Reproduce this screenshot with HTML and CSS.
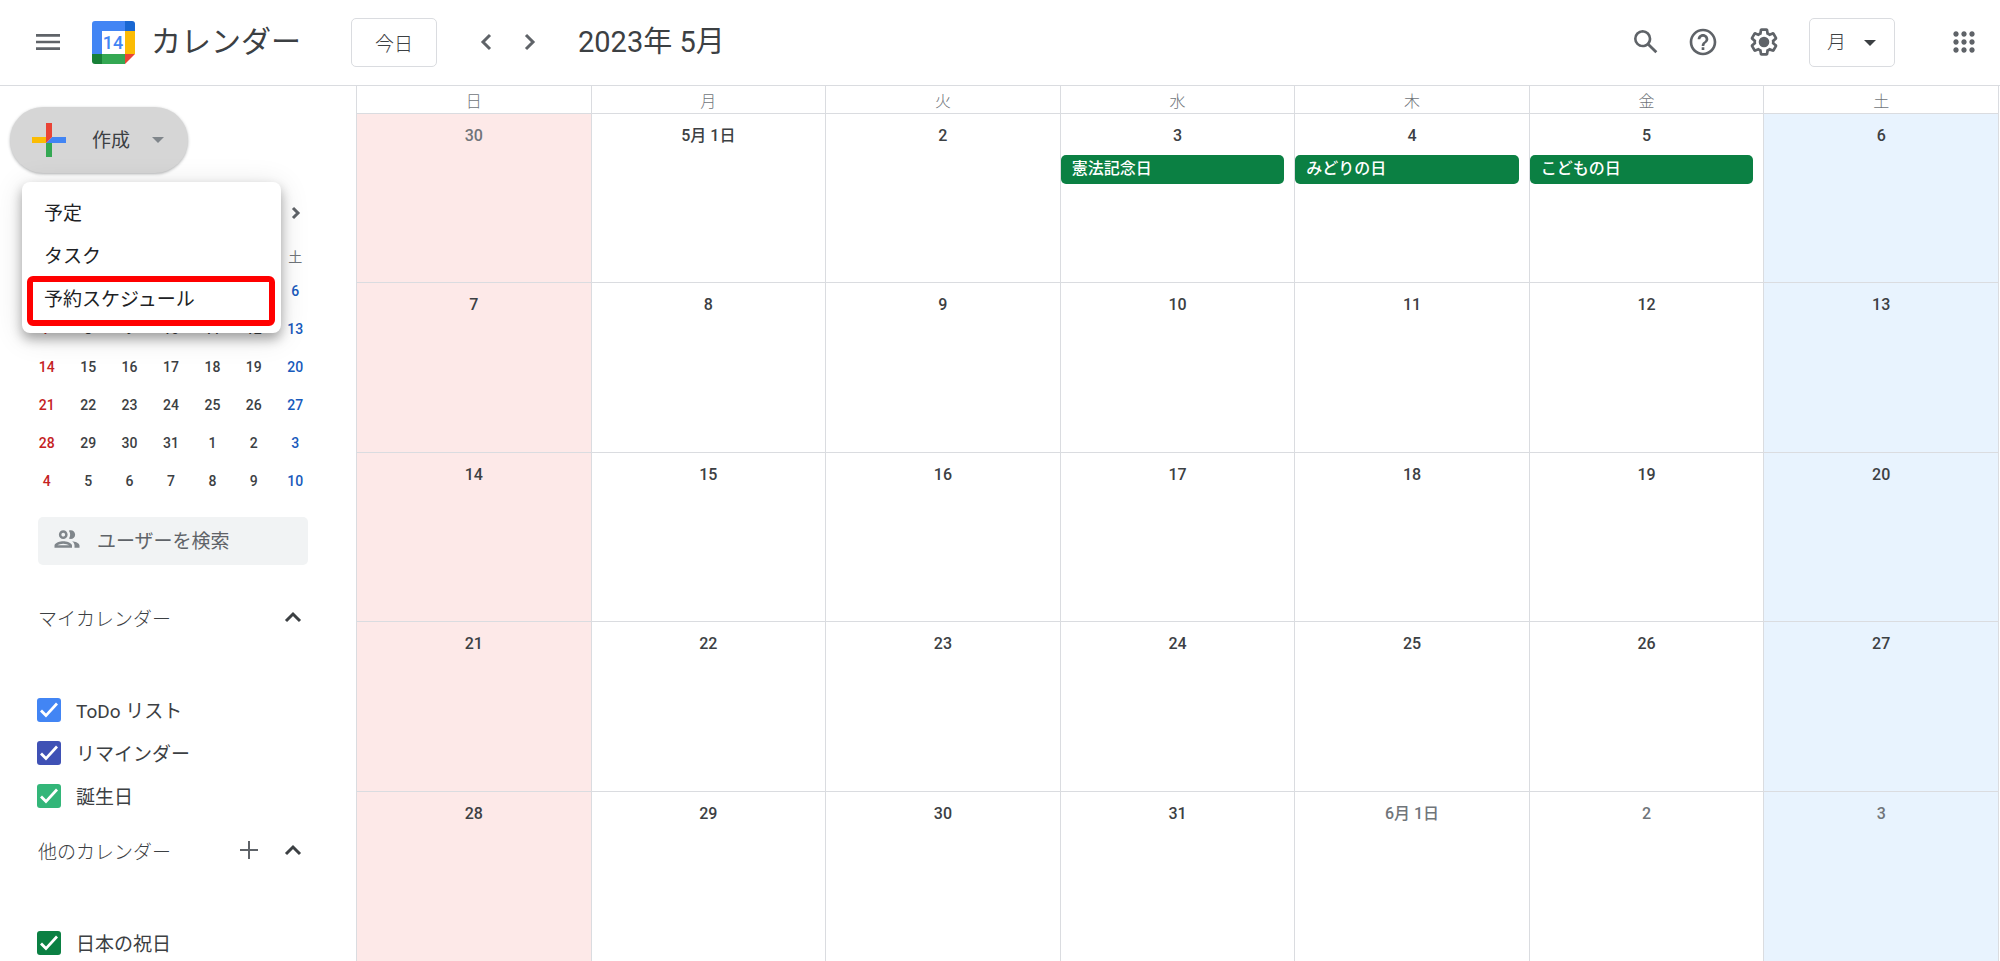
FILE: index.html
```html
<!DOCTYPE html>
<html lang="ja">
<head>
<meta charset="utf-8">
<meta name="viewport" content="width=device-width, initial-scale=1">
<title>カレンダー</title>
<link rel="stylesheet" href="styles.css">
</head>
<body>
<header class="topbar">
  <button class="icon-btn" type="button" aria-label="メニュー">
    <svg class="icon" viewBox="0 0 24 24"><path d="M3 18h18v-2H3v2zm0-5h18v-2H3v2zm0-7v2h18V6H3z"/></svg>
  </button>
  <a class="brand" href="#">
    <svg class="logo" viewBox="0 0 43 43" aria-hidden="true">
      <path fill="#4285f4" d="M3 0H33V10H10V33H0V3Q0 0 3 0Z"/>
      <path fill="#1967d2" d="M33 0H40Q43 0 43 3V10H33Z"/>
      <path fill="#fbbc04" d="M33 10H43V33H33Z"/>
      <path fill="#34a853" d="M10 33H33V43H10Z"/>
      <path fill="#188038" d="M0 33H10V43H3Q0 43 0 40Z"/>
      <path fill="#ea4335" d="M33 33H43L33 43Z"/>
      <path fill="#fff" d="M10 10H33V33H10Z"/>
      <text class="logo-day" x="21" y="28" text-anchor="middle">14</text>
    </svg>
    <span class="brand-name">カレンダー</span>
  </a>
  <button class="today" type="button">今日</button>
  <nav class="pager" aria-label="月の移動">
    <button class="icon-btn" type="button" aria-label="前の月"><svg class="icon" viewBox="0 0 32 32"><path class="chevron" d="M20 9l-7 7 7 7"/></svg></button>
    <button class="icon-btn" type="button" aria-label="次の月"><svg class="icon" viewBox="0 0 32 32"><path class="chevron" d="M12 9l7 7-7 7"/></svg></button>
  </nav>
  <h1 class="period">2023年 5月</h1>
  <div class="tools">
    <button class="icon-btn search" type="button" aria-label="検索">
      <svg class="icon" viewBox="0 0 24 24"><path d="M20.49 19l-5.73-5.73C15.53 12.2 16 10.91 16 9.5A6.5 6.5 0 1 0 9.5 16c1.41 0 2.7-.47 3.77-1.24L19 20.49 20.49 19zM5 9.5C5 7.01 7.01 5 9.5 5S14 7.01 14 9.5 11.99 14 9.5 14 5 11.99 5 9.5z"/></svg>
    </button>
    <button class="icon-btn" type="button" aria-label="サポート">
      <svg class="icon" viewBox="0 0 24 24"><path d="M11 18h2v-2h-2v2zm1-16C6.48 2 2 6.48 2 12s4.48 10 10 10 10-4.48 10-10S17.52 2 12 2zm0 18c-4.41 0-8-3.59-8-8s3.59-8 8-8 8 3.59 8 8-3.59 8-8 8zm0-14c-2.21 0-4 1.79-4 4h2c0-1.1.9-2 2-2s2 .9 2 2c0 2-3 1.75-3 5h2c0-2.25 3-2.5 3-5 0-2.21-1.79-4-4-4z"/></svg>
    </button>
    <button class="icon-btn" type="button" aria-label="設定">
      <svg class="icon" viewBox="0 0 24 24"><path d="M13.85 22.25h-3.7c-.74 0-1.36-.54-1.45-1.27l-.27-1.89c-.27-.14-.53-.29-.79-.46l-1.8.72c-.7.26-1.47-.03-1.81-.65L2.2 15.53c-.35-.66-.2-1.44.36-1.88l1.53-1.19c-.01-.15-.02-.3-.02-.46 0-.15.01-.31.02-.46l-1.52-1.19c-.59-.45-.74-1.26-.37-1.88l1.85-3.19c.34-.62 1.11-.9 1.79-.63l1.81.73c.26-.17.52-.32.78-.46l.27-1.91c.09-.7.71-1.25 1.44-1.25h3.7c.74 0 1.36.54 1.45 1.27l.27 1.89c.27.14.53.29.79.46l1.8-.72c.71-.26 1.48.03 1.82.65l1.84 3.18c.36.66.2 1.44-.36 1.88l-1.52 1.19c.01.15.02.3.02.46s-.01.31-.02.46l1.52 1.19c.56.45.72 1.23.37 1.86l-1.86 3.22c-.34.62-1.11.9-1.8.63l-1.8-.72c-.26.17-.52.32-.78.46l-.27 1.91c-.1.68-.72 1.22-1.46 1.22zm-3.23-2h2.76l.37-2.55.53-.22c.44-.18.88-.44 1.34-.78l.45-.34 2.38.96 1.38-2.4-2.03-1.58.07-.56c.03-.26.06-.51.06-.78s-.03-.53-.06-.78l-.07-.56 2.03-1.58-1.39-2.4-2.39.96-.45-.35c-.42-.32-.87-.58-1.33-.77l-.52-.22-.37-2.55h-2.76l-.37 2.55-.53.21c-.44.19-.88.44-1.34.79l-.45.33-2.38-.95-1.39 2.39 2.03 1.58-.07.56a7 7 0 0 0-.06.79c0 .26.02.53.06.78l.07.56-2.03 1.58 1.38 2.4 2.39-.96.45.35c.43.33.86.58 1.33.77l.53.22.38 2.55z"/><circle cx="12" cy="12" r="4"/></svg>
    </button>
    <label class="view">
      <select class="view-select" aria-label="表示"><option>月</option></select>
      <svg class="caret view-caret" viewBox="0 0 12 6"><path d="M0 0h12L6 6z"/></svg>
    </label>
    <button class="icon-btn apps" type="button" aria-label="アプリ">
      <svg class="icon" viewBox="0 0 24 24"><path d="M6 8c1.1 0 2-.9 2-2s-.9-2-2-2-2 .9-2 2 .9 2 2 2zm6 12c1.1 0 2-.9 2-2s-.9-2-2-2-2 .9-2 2 .9 2 2 2zm-6 0c1.1 0 2-.9 2-2s-.9-2-2-2-2 .9-2 2 .9 2 2 2zm0-6c1.1 0 2-.9 2-2s-.9-2-2-2-2 .9-2 2 .9 2 2 2zm6 0c1.1 0 2-.9 2-2s-.9-2-2-2-2 .9-2 2 .9 2 2 2zm4-8c0 1.1.9 2 2 2s2-.9 2-2-.9-2-2-2-2 .9-2 2zm-4 2c1.1 0 2-.9 2-2s-.9-2-2-2-2 .9-2 2 .9 2 2 2zm6 6c1.1 0 2-.9 2-2s-.9-2-2-2-2 .9-2 2 .9 2 2 2zm0 6c1.1 0 2-.9 2-2s-.9-2-2-2-2 .9-2 2 .9 2 2 2z"/></svg>
    </button>
  </div>
</header>

<div class="layout">
  <aside class="sidebar">
    <div class="create-wrap">
      <button class="create" type="button" aria-haspopup="menu" aria-expanded="true">
        <svg class="create-plus" viewBox="0 0 34 34" aria-hidden="true">
          <path fill="#fbbc04" d="M0 14h14v6H0z"/>
          <path fill="#34a853" d="M14 20h6v14h-6z"/>
          <path fill="#4285f4" d="M20 14h14v6H14z"/>
          <path fill="#ea4335" d="M14 0h6v14l-6 6z"/>
        </svg>
        <span class="create-label">作成</span>
        <svg class="caret create-caret" viewBox="0 0 12 6"><path d="M0 0h12L6 6z"/></svg>
      </button>
      <div class="menu" role="menu">
        <button class="menu-item" type="button" role="menuitem">予定</button>
        <button class="menu-item" type="button" role="menuitem">タスク</button>
        <button class="menu-item marked" type="button" role="menuitem">予約スケジュール</button>
      </div>
    </div>

    <div class="mini">
      <div class="mini-head">
        <button class="mini-next" type="button" aria-label="次の月"><svg class="mini-chevron" viewBox="0 0 24 24"><path class="chevron" d="M9 7l5 5-5 5"/></svg></button>
      </div>
      <table class="mini-table">
        <thead><tr><th></th><th></th><th></th><th></th><th></th><th></th><th>土</th></tr></thead>
        <tbody>
          <tr><td></td><td></td><td></td><td></td><td></td><td></td><td>6</td></tr>
          <tr><td>7</td><td>8</td><td>9</td><td>10</td><td>11</td><td>12</td><td>13</td></tr>
          <tr><td>14</td><td>15</td><td>16</td><td>17</td><td>18</td><td>19</td><td>20</td></tr>
          <tr><td>21</td><td>22</td><td>23</td><td>24</td><td>25</td><td>26</td><td>27</td></tr>
          <tr><td>28</td><td>29</td><td>30</td><td>31</td><td>1</td><td>2</td><td>3</td></tr>
          <tr><td>4</td><td>5</td><td>6</td><td>7</td><td>8</td><td>9</td><td>10</td></tr>
        </tbody>
      </table>
    </div>

    <label class="people">
      <svg class="people-icon" viewBox="0 0 24 24" aria-hidden="true"><path d="M9 13.75c-2.34 0-7 1.17-7 3.5V19h14v-1.75c0-2.33-4.66-3.5-7-3.5zM4.34 17c.84-.58 2.87-1.25 4.66-1.25s3.82.67 4.66 1.25H4.34zM9 12c1.93 0 3.5-1.57 3.5-3.5S10.93 5 9 5 5.5 6.57 5.5 8.5 7.07 12 9 12zm0-5c.83 0 1.5.67 1.5 1.5S9.83 10 9 10s-1.5-.67-1.5-1.5S8.17 7 9 7zm7.04 6.81c1.16.84 1.96 1.96 1.96 3.44V19h4v-1.75c0-2.02-3.5-3.17-5.96-3.44zM15 12c1.93 0 3.5-1.57 3.5-3.5S16.93 5 15 5c-.54 0-1.04.13-1.5.35.63.89 1 1.98 1 3.15s-.37 2.26-1 3.15c.46.22.96.35 1.5.35z"/></svg>
      <input class="people-input" type="text" placeholder="ユーザーを検索" aria-label="ユーザーを検索">
    </label>

    <section class="group">
      <div class="group-head">
        <h2 class="group-title">マイカレンダー</h2>
        <button class="group-btn" type="button" aria-label="マイカレンダーを折りたたむ"><svg class="group-icon" viewBox="0 0 24 24"><path class="chevron dark" d="M5 16l7-7 7 7"/></svg></button>
      </div>
      <div class="group-list">
        <label class="cal"><input class="check blue" type="checkbox" checked>ToDo リスト</label>
        <label class="cal"><input class="check indigo" type="checkbox" checked>リマインダー</label>
        <label class="cal"><input class="check mint" type="checkbox" checked>誕生日</label>
      </div>
    </section>
    <section class="group">
      <div class="group-head">
        <h2 class="group-title">他のカレンダー</h2>
        <button class="group-btn" type="button" aria-label="他のカレンダーを追加"><svg class="group-icon" viewBox="0 0 24 24"><path class="thin-plus" d="M12 3v18M3 12h18"/></svg></button>
        <button class="group-btn" type="button" aria-label="他のカレンダーを折りたたむ"><svg class="group-icon" viewBox="0 0 24 24"><path class="chevron dark" d="M5 16l7-7 7 7"/></svg></button>
      </div>
      <div class="group-list">
        <label class="cal"><input class="check green" type="checkbox" checked>日本の祝日</label>
      </div>
    </section>
  </aside>

  <main class="main">
    <table class="month">
      <thead><tr><th>日</th><th>月</th><th>火</th><th>水</th><th>木</th><th>金</th><th>土</th></tr></thead>
      <tbody>
        <tr><td class="outside">30</td><td>5月 1日</td><td>2</td>
          <td>3<button class="event" type="button">憲法記念日</button></td>
          <td>4<button class="event" type="button">みどりの日</button></td>
          <td>5<button class="event" type="button">こどもの日</button></td>
          <td>6</td></tr>
        <tr><td>7</td><td>8</td><td>9</td><td>10</td><td>11</td><td>12</td><td>13</td></tr>
        <tr><td>14</td><td>15</td><td>16</td><td>17</td><td>18</td><td>19</td><td>20</td></tr>
        <tr><td>21</td><td>22</td><td>23</td><td>24</td><td>25</td><td>26</td><td>27</td></tr>
        <tr><td>28</td><td>29</td><td>30</td><td>31</td><td class="outside">6月 1日</td><td class="outside">2</td><td class="outside">3</td></tr>
      </tbody>
    </table>
  </main>
</div>
</body>
</html>
```

FILE: styles.css
```css
* { box-sizing: border-box; }

body {
  margin: 0;
  height: 100vh;
  display: flex;
  flex-direction: column;
  overflow: hidden;
  background: #fff;
  color: #3c4043;
  font-family: Roboto, "Noto Sans CJK JP", sans-serif;
  font-size: 19px;
}

button, input, select {
  font: inherit;
  color: inherit;
  border: 0;
  padding: 0;
  background: none;
}

button { cursor: pointer; }
svg { display: block; fill: #5f6368; }
table { border-collapse: separate; border-spacing: 0; table-layout: fixed; }

.chevron { fill: none; stroke: #5f6368; stroke-width: 3; }
.dark { stroke: #3c4043; }

/* Top bar */
.topbar {
  flex: none;
  display: flex;
  align-items: center;
  height: 86px;
  padding: 0 20px 1px 32px;
  border-bottom: 1px solid #dadce0;
}
.icon, .icon-btn { width: 32px; height: 32px; }
.icon-btn { flex: none; }
.brand {
  display: flex;
  align-items: center;
  gap: 16px;
  margin-left: 28px;
  color: #3c4043;
  text-decoration: none;
}
.logo { width: 43px; height: 43px; }
.logo-day { fill: #4285f4; font-size: 18px; font-weight: 500; }
.brand-name { font-size: 30px; line-height: 40px; }
.today {
  width: 86px;
  height: 49px;
  margin-left: 50px;
  border: 1px solid #dadce0;
  border-radius: 5px;
  font-weight: 300;
}
.pager { display: flex; gap: 12px; margin-left: 33px; }
.period {
  margin: 0 0 0 32px;
  font-size: 29px;
  font-weight: 400;
  line-height: 40px;
}
.tools { display: flex; align-items: center; gap: 29px; margin-left: auto; }
.search { margin-right: -4px; }
.view { position: relative; display: block; }
.view-select {
  display: block;
  appearance: none;
  width: 86px;
  height: 49px;
  padding-left: 17px;
  border: 1px solid #dadce0;
  border-radius: 5px;
  font-weight: 300;
}
.caret { width: 12px; height: 6px; }
.view-caret { position: absolute; right: 19px; top: 22px; fill: #3c4043; pointer-events: none; }
.apps { margin-left: 24px; }

/* Layout */
.layout { flex: 1; display: flex; min-height: 0; }
.sidebar { flex: none; width: 356px; overflow: hidden; }
.main { flex: 1; display: flex; padding-right: 1px; }

/* Create button and menu */
.create-wrap { position: relative; padding: 21px 0 0 10px; }
.create {
  display: flex;
  align-items: center;
  width: 178px;
  height: 66px;
  padding-left: 22px;
  border-radius: 33px;
  background: #d6d6d6;
  box-shadow: 0 1px 3px rgba(60, 64, 67, .4);
}
.create-plus { width: 34px; height: 34px; margin-right: 26px; }
.create-label { padding-bottom: 4px; }
.create-caret { margin-left: 22px; fill: #80868b; }
.menu {
  position: absolute;
  z-index: 2;
  left: 22px;
  top: 96px;
  width: 259px;
  padding: 8px 0 14px;
  border-radius: 8px;
  background: #fff;
  color: #202124;
  box-shadow: 0 6px 12px rgba(0, 0, 0, .32), 0 4px 30px rgba(0, 0, 0, .12);
}
.menu-item {
  position: relative;
  display: block;
  width: 100%;
  height: 43px;
  padding-left: 22px;
  text-align: left;
}
.marked::after {
  content: "";
  position: absolute;
  inset: 0 6px -7px 5px;
  border: 6px solid #f00;
  border-radius: 6px;
}

/* Mini calendar */
.mini { width: 290px; margin: 13px 0 0 26px; }
.mini-head { display: flex; align-items: center; justify-content: flex-end; height: 54px; }
.mini-next { padding: 0 8px; }
.mini-chevron { width: 24px; height: 24px; }
.mini-table { width: 100%; font-size: 14px; }
.mini-table th { height: 32px; padding: 0; font-weight: 400; color: #70757a; }
.mini-table td { height: 38px; padding: 0; text-align: center; font-weight: 500; }
.mini-table td:first-child { color: #c5221f; }
.mini-table td:last-child { color: #185abc; }

/* People search */
.people {
  display: flex;
  align-items: center;
  width: 270px;
  height: 48px;
  margin: 17px 0 0 38px;
  border-radius: 5px;
  background: #f1f3f4;
}
.people-icon { flex: none; width: 30px; height: 30px; margin: 0 15px 4px 14px; fill: #80868b; }
.people-input { flex: 1; min-width: 0; height: 48px; }
.people-input::placeholder { color: #5f6368; opacity: 1; }

/* Calendar groups */
.group { padding: 0 51px 0 38px; }
.people + .group { margin-top: 28px; }
.group-head { display: flex; align-items: center; gap: 20px; height: 48px; }
.group-title { flex: 1; margin: 0; font-size: 19px; font-weight: 300; }
.group-icon { width: 24px; height: 24px; }
.thin-plus { fill: none; stroke: #5f6368; stroke-width: 2; }
.group-list { padding: 47px 0 9px; }
.cal { display: flex; align-items: center; gap: 15px; height: 43px; white-space: nowrap; }
.check {
  appearance: none;
  flex: none;
  width: 24px;
  height: 24px;
  margin: 0 0 0 -1px;
  border-radius: 3px;
}
.check::before {
  content: "";
  display: block;
  width: 24px;
  height: 24px;
  background: #fff;
  clip-path: polygon(9px 16px, 5px 12px, 3px 14px, 9px 20px, 21px 7px, 19px 5px);
}
.blue { background: #4285f4; }
.indigo { background: #3f51b5; }
.mint { background: #33b679; }
.green { background: #0b8043; }

/* Month grid */
.month { width: 100%; font-size: 16px; border-right: 1px solid #dadce0; }
.month th {
  height: 28px;
  padding: 4px 0 0;
  border: solid #dadce0;
  border-width: 0 0 1px 1px;
  color: #70757a;
  font-weight: 300;
  line-height: 23px;
}
.month td {
  height: 120px;
  padding: 10px 0 0;
  border: solid #dadce0;
  border-width: 0 0 1px 1px;
  text-align: center;
  vertical-align: top;
  font-weight: 500;
  line-height: 24px;
}
.month tr:last-child td { border-bottom: 0; }
.month td:first-child { background: #fde9e8; }
.month td:last-child { background: #e8f3fe; }
.month .outside { color: #70757a; }
.event {
  display: block;
  width: calc(100% - 10px);
  height: 29px;
  margin-top: 7px;
  padding: 0 0 2px 11px;
  border-radius: 5px;
  background: #0b8043;
  color: #fff;
  text-align: left;
}
```
